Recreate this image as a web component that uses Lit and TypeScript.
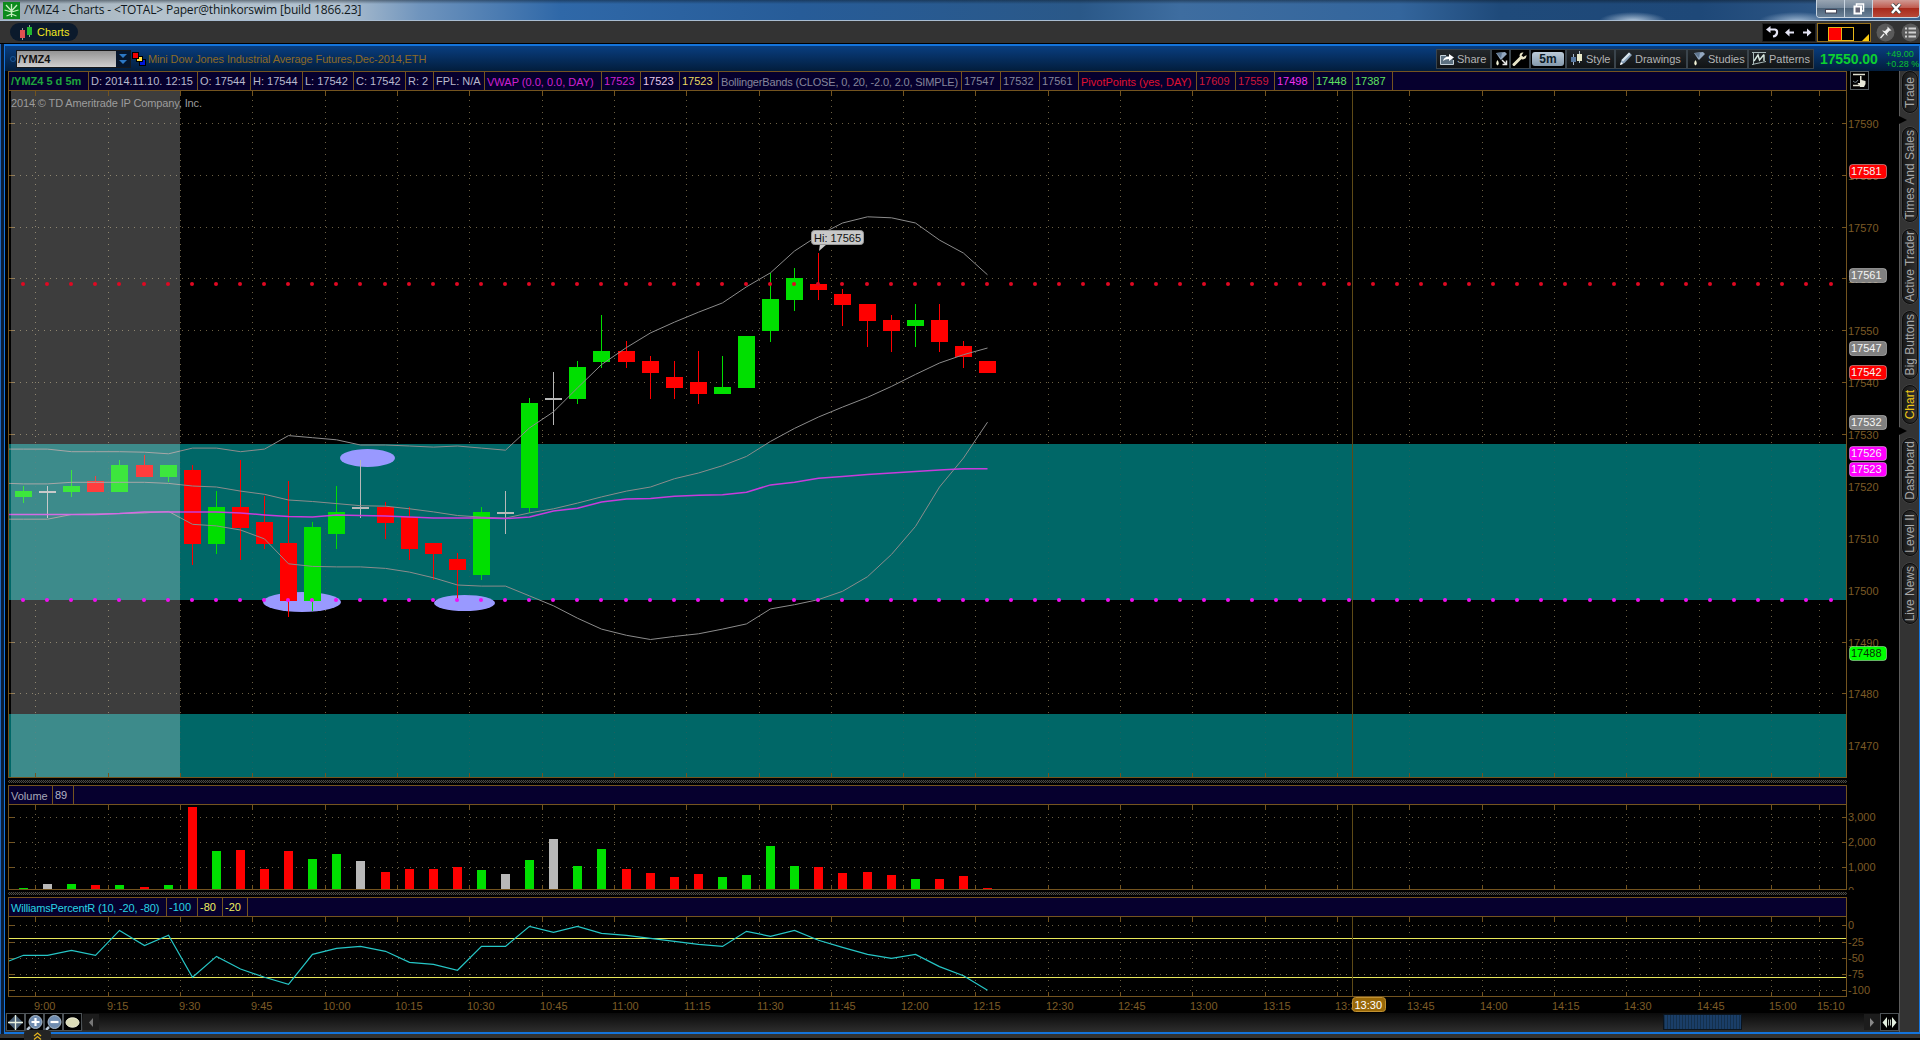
import { LitElement, html, svg, css } from 'lit';
import { customElement } from 'lit/decorators.js';
import { classMap } from 'lit/directives/class-map.js';
import { styleMap } from 'lit/directives/style-map.js';

// open, close, high, low (offset from 17500), volume, %R
type Bar = [number, number, number, number, number, number];

const BARS: Bar[] = [
  [18, 19, 20, 17, 134, -46.2],
  [19, 19, 20, 14, 296, -46.2],
  [19, 20, 23, 18, 296, -38.5],
  [21, 19, 22, 19, 255, -46.2],
  [19, 24, 25, 19, 255, -7.8],
  [24, 22, 26, 22, 174, -31.3],
  [22, 24, 24, 21, 255, -15.4],
  [23, 9, 24, 5, 3413, -80],
  [9, 16, 19, 7, 1632, -47.8],
  [16, 12, 25, 6, 1672, -67.2],
  [13, 9, 18, 8, 903, -80],
  [9, -2, 21, -5, 1632, -90.8],
  [-2, 12, 13, -4, 1308, -44.7],
  [11, 15, 20, 8, 1510, -35.4],
  [16, 16, 25, 14, 1227, -32.4],
  [16, 13, 17, 10, 781, -40],
  [14, 8, 16, 6, 903, -57],
  [9, 7, 9, 2, 903, -60],
  [6, 4, 7, -2, 984, -69.3],
  [3, 15, 16, 2, 862, -32.4],
  [15, 15, 19, 11, 700, -32.4],
  [16, 36, 37, 15, 1267, -1.6],
  [37, 37, 42, 32, 2117, -10.8],
  [37, 43, 44, 36, 1024, -1.6],
  [44, 46, 53, 43, 1713, -12.4],
  [46, 44, 48, 43, 903, -15.4],
  [44, 42, 45, 37, 741, -20],
  [41, 39, 44, 37, 579, -24.7],
  [40, 38, 46, 36, 700, -29.3],
  [38, 39, 45, 38, 579, -32.4],
  [39, 49, 49, 39, 660, -9.3],
  [50, 56, 61, 48, 1834, -17],
  [56, 60, 62, 54, 1024, -7.8],
  [59, 58, 65, 56, 984, -23],
  [57, 55, 58, 51, 741, -33.9],
  [55, 52, 55, 47, 781, -44.7],
  [52, 50, 53, 46, 660, -50.8],
  [51, 52, 55, 47, 498, -44.7],
  [52, 48, 55, 46, 498, -63.6],
  [47, 45, 48, 43, 619, -77.5],
  [44, 42, 44, 42, 134, -100],
];

// The first value of every study line sits on the left edge of the pane.
const UPPER = [
  27.1, 27.1, 27.1, 26.6, 26.6, 26.6, 26.5, 26.2, 27.3, 27.3, 26.6, 27.1, 29.7, 29.3, 28.9, 27.9, 27.9, 27.7, 27.5,
  27.7, 27.3, 26.9, 31.2, 34.3, 38.9, 43.4, 46.7, 49.5, 51.6, 53.5, 55.3, 58.4, 61.1, 65.3, 68.3, 70.7, 71.9, 71.7,
  70.7, 67.4, 64.9, 60.7,
];
const MIDDLE = [
  20.5, 20.4, 20.4, 20.7, 20.7, 20.7, 20.7, 20.5, 20, 19.8, 19, 18.4, 17.3, 17, 16.6, 16.2, 16.1, 15.6, 15, 14.3, 14,
  13.8, 14.8, 15.6, 16.7, 17.9, 19, 19.8, 21.4, 22.5, 23.9, 25.7, 28.6, 31.1, 33.3, 35.2, 37.1, 39.2, 41.5, 43.7,
  45.3, 46.6,
];
const LOWER = [
  13.6, 13.6, 13.6, 14.5, 14.6, 14.7, 14.8, 15.1, 12.6, 12.3, 11.5, 9.8, 5, 4.5, 4.4, 4.4, 4.1, 3.4, 2.3, 0.9, 0.7,
  0.7, -1.2, -3.1, -5.5, -7.6, -8.8, -9.6, -9, -8.5, -7.6, -6.6, -3.7, -2.9, -1.9, -0.3, 2.5, 6.8, 12.2, 19.8, 25.4,
  32.3,
];
const VWAP = [
  14.5, 14.5, 14.5, 14.5, 14.5, 14.7, 15, 15, 15, 15, 14.8, 14.4, 14.1, 14, 14.4, 14.3, 14.2, 14, 13.8, 13.8, 13.8,
  13.7, 14, 15.2, 15.7, 16.9, 17.5, 17.6, 18, 18.2, 18.3, 18.8, 20.2, 20.7, 21.5, 21.8, 22.2, 22.5, 22.8, 23.1, 23.3,
  23.3,
];

const TIMES = [
  '9:00', '9:15', '9:30', '9:45', '10:00', '10:15', '10:30', '10:45', '11:00', '11:15', '11:30', '11:45', '12:00',
  '12:15', '12:30', '12:45', '13:00', '13:15', '13:30', '13:45', '14:00', '14:15', '14:30', '14:45', '15:00',
];

const LEFT = 8;
const RIGHT = 1846;
const CROSS_X = 1352;

const barX = (i: number) => Math.round(23 + i * 24.1);
const priceY = (p: number) => 589.7 - p * 5.187;
const volumeY = (v: number) => 891.3 - (v / 1000) * 24.7;
const percentY = (r: number) => 925.3 - r * 0.65;

const GRID_X = [...TIMES.map((_, i) => Math.round(35.2 + i * 72.33)), 1819];
const LABELS = [...TIMES, '15:10'];

const colorOf = ([open, close]: Bar) => (close > open ? '#00df00' : close < open ? '#ff0000' : '#b8b8b8');

const points = (values: number[], y: (v: number) => number) =>
  values.map((v, i) => `${i === 0 ? LEFT + 1 : barX(i - 1) + 0.5},${y(v).toFixed(1)}`).join(' ');

const TAGS = [
  { text: '17581', y: 171, fill: '#ff0000' },
  { text: '17561', y: 275, fill: '#808080' },
  { text: '17547', y: 348, fill: '#808080' },
  { text: '17542', y: 372, fill: '#ff0000' },
  { text: '17532', y: 422, fill: '#808080' },
  { text: '17526', y: 453, fill: '#ff00ff' },
  { text: '17523', y: 469, fill: '#ff00ff' },
  { text: '17488', y: 653, fill: '#00ff00' },
];

// text, colour, cell width, extra class
type Cell = [string, string, number, string?];

const PRICE_CELLS: Cell[] = [
  ['/YMZ4 5 d 5m', '#1fa53c', 80, 'bold'],
  ['D: 2014.11.10. 12:15', '#b9b9cc', 109],
  ['O: 17544', '#b9b9cc', 53],
  ['H: 17544', '#b9b9cc', 52],
  ['L: 17542', '#b9b9cc', 51],
  ['C: 17542', '#b9b9cc', 52],
  ['R: 2', '#b9b9cc', 28],
  ['FPL: N/A', '#b9b9cc', 51],
  ['VWAP (0.0, 0.0, DAY)', '#d020d0', 117, 'low'],
  ['17523', '#d020d0', 39],
  ['17523', '#e8c8e8', 39],
  ['17523', '#e8d860', 39],
  ['BollingerBands (CLOSE, 0, 20, -2.0, 2.0, SIMPLE)', '#85859a', 243, 'tight'],
  ['17547', '#85859a', 39],
  ['17532', '#85859a', 39],
  ['17561', '#85859a', 39],
  ['PivotPoints (yes, DAY)', '#e01030', 118, 'low'],
  ['17609', '#d01838', 39],
  ['17559', '#d01838', 39],
  ['17498', '#f030f0', 39],
  ['17448', '#60e060', 39],
  ['17387', '#60e060', 40],
];
const VOLUME_CELLS: Cell[] = [
  ['Volume', '#a8a8b8', 44, 'low'],
  ['89', '#b4b4c4', 21],
];
const PERCENT_CELLS: Cell[] = [
  ['WilliamsPercentR (10, -20, -80)', '#28d4e4', 158, 'tight'],
  ['-100', '#28d4e4', 31],
  ['-80', '#f0f060', 25],
  ['-20', '#f0f060', 25],
];

const TABS = [
  { text: 'Trade', height: 42, gap: 0 },
  { text: 'Times And Sales', height: 95, gap: 14 },
  { text: 'Active Trader', height: 75, gap: 7 },
  { text: 'Big Buttons', height: 68, gap: 7 },
  { text: 'Chart', height: 39, gap: 6, active: true },
  { text: 'Dashboard', height: 65, gap: 14 },
  { text: 'Level II', height: 46, gap: 7 },
  { text: 'Live News', height: 61, gap: 7 },
];

const icon = (w: number, h: number, body: unknown) =>
  html`<svg class="icon" width=${w} height=${h} viewBox="0 0 ${w} ${h}">${body}</svg>`;

const funnel = svg`<path d="M3 2 L12 1 L14 3 L8 9 L7 8 Z" fill="#93a8c0"/><path d="M3 2 L9 1.5 L8 7 Z" fill="#5f7690"/>
  <path d="M4.5 9 Q7 13 4.5 14.5 Q2 13 4.5 9" fill="#f4f4d8"/>`;

const ICONS = {
  leaf: icon(17, 17, svg`<rect width="17" height="17" fill="#0c8a1c"/>
    <path d="M8.5 15 V2 M8.5 9 L3 3 M8.5 9 L14 3 M8.5 10 L1.5 8 M8.5 10 L15.5 8 M8.5 12 L3.5 14 M8.5 12 L13.5 14" stroke="#c8f0c0" stroke-width="1.3" fill="none"/>`),
  candles: icon(15, 15, svg`<path d="M3.5 3 V15 M10.5 0 V12" stroke="#999"/><rect x="1" y="5" width="5" height="8" fill="#e05050"/>
    <rect x="8" y="2" width="5" height="8" fill="#20b830"/>`),
  link: icon(14, 14, svg`<rect x="7.5" y="7.5" width="6" height="6" fill="#0018d8" stroke="#000"/>
    <rect x="4.5" y="4.5" width="6" height="5" fill="#ffe040" stroke="#000"/><rect x=".5" y=".5" width="6" height="6" fill="#f00000" stroke="#000"/>`),
  share: icon(15, 14, svg`<path d="M6 3.5 H.5 V12.5 H13.5 V8" fill="#5c7080" stroke="#c4d0d8"/>
    <path d="M3 9 Q4 4.500 9 4.500 V2 L14 5.500 L9 9 V7 Q5 7 3 9" fill="#fff"/>`),
  funnelMove: icon(16, 16, svg`${funnel}<path d="M9 9 L13 13 M13.500 9.500 V13.500 H9.500" stroke="#e8e8e8" stroke-width="1.5" fill="none"/>`),
  funnel: icon(15, 16, funnel),
  wrench: icon(16, 16, svg`<path d="M2 13.500 L8.500 7" stroke="#e8e4c8" stroke-width="3" stroke-linecap="round"/>
    <path d="M14.500 4 L11.500 6 L9.500 4.500 L11.500 1.500 Q8 1 7.500 4.500 Q8 8.500 11 8.500 Q14.500 8 14.500 4" fill="#e8e4c8"/>`),
  style: icon(14, 15, svg`<path d="M3.500 3 V14 M9.500 0 V12" stroke="#a8b8c8"/><rect x="1" y="6" width="5" height="5" fill="#5878a0"/>
    <rect x="7" y="3" width="5" height="7" fill="#e8e8c8"/>`),
  pencil: icon(14, 15, svg`<path d="M1 14 L2.500 9 L10 1.500 L13 4 L5.500 12 Z" fill="#88a0b8"/><path d="M2.500 9 L10 1.500 L11.500 3 L4 10.500 Z" fill="#d8e4ec"/>
    <path d="M1 14 L2 11 L4 13 Z" fill="#fff"/>`),
  patterns: icon(15, 15, svg`<path d="M0 1.500 H14 M1.500 1 V13.500 M0 13.500 L14 10.500" stroke="#a8b8b8"/><path d="M2 10 L6 4 L7.500 9 L12 3.500 M12 3.500 V10" stroke="#d8e8e0" stroke-width="1.400" fill="none"/>`),
  undo: icon(50, 17, svg`<path d="M5 5.500 H10 Q12.500 6 12 9 Q11.500 12 8 12.500" stroke="#e4e4f4" stroke-width="2.200" fill="none"/><path d="M1 5.500 L5.500 2 V9 Z" fill="#e4e4f4"/>
    <path d="M23 8.500 H29 M38 8.500 H43" stroke="#e4e4f4" stroke-width="2"/><path d="M20 8.500 L24.500 4.500 V12.500 Z M46.500 8.500 L42 4.500 V12.500 Z" fill="#e4e4f4"/>`),
  pin: icon(19, 19, svg`<circle cx="9.500" cy="9.500" r="9" fill="#5a5a5a"/><path d="M4.500 15 L8 11" stroke="#eee" stroke-width="1.300"/>
    <path d="M6 7.500 L9 8 L11.500 5.500 L11.500 3.500 L15.500 7.500 L13.500 7.700 L11 10.500 L11.500 13 Z" fill="#f0f0f0"/>`),
  list: icon(19, 19, svg`<circle cx="9.500" cy="9.500" r="9" fill="#5a5a5a"/><path d="M4 5.500 H6 M7.500 5.500 H15 M4 9.500 H6 M7.500 9.500 H15 M4 13.500 H6 M7.500 13.500 H15" stroke="#d0d0d0" stroke-width="2"/>`),
  hand: icon(19, 19, svg`<rect x=".5" y=".5" width="18" height="18" fill="#000" stroke="#555d60"/><path d="M3 3.500 H15 M3 14.500 H9" stroke="#e0e0d0" stroke-width="1.500"/>
    <path d="M3 10 Q6 13 8 9" stroke="#788890" fill="none"/><path d="M10 5 H11.500 V9 L15.500 10 V13 L14 16 H10 L7.500 12 L10 12 Z" fill="#e8e8d8"/>`),
  cross: icon(17, 17, svg`<path d="M8.500 1 L16 8.500 L8.500 16 L1 8.500 Z" fill="#4a6076"/><path d="M8.500 1 V16 M1 8.500 H16" stroke="#e8f0e0" stroke-width="1.300"/>`),
  zoomIn: icon(17, 17, svg`<path d="M1 16 L4 13" stroke="#b8c8d8" stroke-width="2.500"/><circle cx="9.500" cy="8" r="6.500" fill="#6f8cb0" stroke="#a8b8c8"/><path d="M9.500 4 V12 M5.500 8 H13.500" stroke="#fff" stroke-width="2.200"/>`),
  zoomOut: icon(17, 17, svg`<path d="M1 16 L4 13" stroke="#b8c8d8" stroke-width="2.500"/><circle cx="9.500" cy="8" r="6.500" fill="#6f8cb0" stroke="#a8b8c8"/><path d="M5.500 8 H13.500" stroke="#fff" stroke-width="2.200"/>`),
  oval: icon(17, 17, svg`<ellipse cx="8.500" cy="8.500" rx="6.500" ry="4.700" fill="#dcdcb8" stroke="#f0f0d8"/>`),
  split: icon(17, 17, svg`<path d="M1.500 8.500 L6 3 V14 Z M15.500 8.500 L11 3 V14 Z" fill="#e4f0e0"/><path d="M7.500 5.500 V11.500 M9.500 5.500 V11.500" stroke="#b8c4b8"/>`),
};

@customElement('app-root')
export class AppRoot extends LitElement {
  static styles = css`
    :host {
      display: flex;
      flex-direction: column;
      width: 1920px;
      height: 1040px;
      overflow: hidden;
      background: #000;
      font: 11px/14px 'Liberation Sans', Arial, sans-serif;
      color: #b8b8b8;
      white-space: nowrap;
    }
    * {
      box-sizing: border-box;
    }
    svg {
      display: block;
      flex: none;
    }
    .titlebar {
      display: flex;
      align-items: center;
      height: 21px;
      padding-left: 3px;
      gap: 4px;
      border-bottom: 1px solid #a9bdd2;
      color: #101820;
      font: 12px/16px 'Open Sans', sans-serif;
      background:
        linear-gradient(rgba(10, 20, 30, 0.45), transparent 4px),
        radial-gradient(34px 9px at 1633px 21px, #b4c8dc, transparent),
        radial-gradient(38px 9px at 1797px 21px, #9db6d0, transparent),
        linear-gradient(90deg, #9aa8b4 0, #b4c2cc 150px, #afc0cf 340px, #6f94bd 420px, #2f68a8 560px, #275c98 800px,
          #2a5888 1080px, #3e6da0 1180px, #33659c 1400px, #1f4a7a 1500px, #1e4878 1700px, #3a6290 1920px);
    }
    .title {
      letter-spacing: -0.14px;
    }
    .window-buttons {
      display: flex;
      align-self: flex-start;
      width: 104px;
      height: 18px;
      margin-left: auto;
      border: 1px solid #c8d4e0;
      border-top: 0;
      border-radius: 0 0 4px 4px;
      overflow: hidden;
    }
    .window-button {
      display: flex;
      justify-content: center;
      align-items: center;
      width: 28px;
      border-right: 1px solid #c8d4e0;
      background: linear-gradient(#99a5b2, #76889b 45%, #4d6379 50%, #6c8298);
    }
    .window-close {
      flex: 1;
      border: 0;
      background: linear-gradient(#d09a94, #c05c50 45%, #a82a1c 50%, #b84838);
    }
    .strip {
      display: flex;
      align-items: center;
      height: 22px;
      padding: 0 0 0 10px;
      background: #333;
    }
    .charts-tab {
      display: flex;
      align-items: center;
      gap: 3px;
      width: 68px;
      height: 18px;
      padding-left: 9px;
      border-radius: 9px;
      background: #0b1a2c;
      color: #f0e820;
    }
    .strip-tools {
      display: flex;
      align-items: center;
      margin-left: auto;
      gap: 1px;
    }
    .history {
      width: 54px;
      height: 19px;
      padding-left: 2px;
      border: 1px solid #222;
      background: #000;
    }
    .color-link {
      display: flex;
      width: 54px;
      height: 19px;
      border: 1px solid #96701c;
      background: #000;
      margin-right: 4px;
    }
    .strip-tools .round {
      margin-right: 5px;
    }
    .workspace {
      display: flex;
      height: 990px;
      background: #0b1d36;
      border-left: 1px solid #1d66c0;
      padding-left: 3px;
      margin-top: 1px;
    }
    .frame {
      flex: 1;
      display: flex;
      flex-direction: column;
      border: solid #1474dc;
      border-width: 2px 1px 2px 1px;
      background: #000;
    }
    .toolbar {
      display: flex;
      align-items: center;
      height: 25px;
      padding-left: 5px;
      background: linear-gradient(#093e80, #021d3c);
    }
    .ring {
      width: 6px;
      height: 6px;
      border: 1px solid #1c5896;
      border-radius: 50%;
    }
    .symbol {
      display: flex;
      align-items: center;
      width: 115px;
      height: 18px;
      margin: 0 1px 0 0;
      padding-left: 1px;
      border: 1px solid #16181a;
      background: linear-gradient(#949494, #cfcfcf);
      color: #111;
      font-weight: bold;
    }
    .drop {
      margin-left: auto;
      width: 14px;
      height: 16px;
      background: #06162c;
    }
    .description {
      margin-left: 2px;
      color: #8d6a26;
      letter-spacing: -0.12px;
    }
    .buttons {
      display: flex;
      margin-left: auto;
    }
    .button {
      display: flex;
      align-items: center;
      gap: 2px;
      height: 20px;
      padding-left: 3px;
      border: 1px solid #3a444c;
      background: linear-gradient(#23282c, #111416);
      color: #b4b4b4;
    }
    .button.dark {
      padding-left: 1px;
      background: #000;
    }
    .interval {
      width: 32px;
      height: 14px;
      border-radius: 3px;
      background: linear-gradient(#bccbd8, #8499ac);
      color: #0c1c28;
      text-align: center;
      font-size: 12px;
      font-weight: bold;
    }
    .last {
      width: 60px;
      margin: 0 0 0 6px;
      color: #0cd030;
      font: bold 14px/14px 'Liberation Sans', sans-serif;
      letter-spacing: -0.1px;
    }
    .change {
      width: 32px;
      margin: 0 1px 0 6px;
      color: #0cc030;
      font-size: 9px;
      line-height: 10px;
    }
    .main {
      display: flex;
      height: 961px;
    }
    .panes {
      display: flex;
      flex-direction: column;
      width: 1894px;
      padding-left: 3px;
    }
    .study-row {
      display: flex;
      height: 19px;
    }
    .study {
      display: flex;
      width: 1839px;
      height: 19px;
      border: 1px solid #74541f;
      border-bottom: 0;
      background: #06002e;
    }
    .cell {
      height: 18px;
      padding-left: 2px;
      border-right: 1px solid #74541f;
      line-height: 18px;
      overflow: hidden;
    }
    .cell.bold {
      font-weight: bold;
    }
    .cell.low {
      line-height: 20px;
    }
    .cell.tight {
      line-height: 20px;
      letter-spacing: -0.17px;
    }
    .hand {
      margin-left: 3px;
    }
    .splitter {
      width: 1839px;
      height: 7px;
      padding: 2px 0;
    }
    .splitter-grip {
      height: 3px;
      background: repeating-conic-gradient(#4a4a44 0 25%, #0c0c0c 0 50%) 0 0 / 2px 2px;
    }
    .scroll {
      display: flex;
      height: 19px;
      margin-left: -3px;
      padding-left: 1px;
      background: linear-gradient(#0a0a0a, #2e2e2e);
    }
    .scroll-tool {
      display: flex;
      justify-content: center;
      width: 19px;
      height: 18px;
      border: 1px solid #4c5256;
      background: #000;
      overflow: hidden;
    }
    .arrow {
      display: flex;
      align-items: center;
      justify-content: center;
      width: 16px;
      height: 16px;
      margin: 1px 0 0 1px;
      background: #1c1c1c;
    }
    .thumb {
      width: 79px;
      height: 16px;
      margin: 1px 0 0 1564px;
      border: 1px solid #0a141e;
      background: repeating-linear-gradient(90deg, #14304c 0 1px, #1a3e68 1px 3px);
    }
    .scroll .to-right {
      margin-left: auto;
    }
    .sidebar {
      display: flex;
      flex-direction: column;
      flex: 1;
      padding-left: 2px;
      border-left: 1px solid #5c5c5c;
      background: #333;
    }
    .tab {
      position: relative;
      display: flex;
      align-items: center;
      justify-content: center;
      width: 16px;
      border: 1px solid #0c0c0c;
      border-radius: 8px;
      background: linear-gradient(90deg, #181818, #323232);
      box-shadow: 0 0 0 0.5px #505050;
      color: #a8a8a8;
      font-size: 12px;
    }
    .tab span {
      writing-mode: vertical-rl;
      transform: rotate(180deg);
    }
    .tab.active {
      color: #f0c818;
    }
    .tab.notched::before {
      content: '';
      position: absolute;
      left: -4px;
      top: -12px;
      border: solid transparent;
      border-width: 4px 0 4px 8px;
      border-left-color: #000;
    }
    .bottom {
      display: flex;
      height: 6px;
      border-bottom: 2px solid #000;
      background: #333;
    }
    .expander {
      position: relative;
      top: -4px;
      width: 27px;
      height: 10px;
      margin-left: 24px;
      padding-top: 2px;
      border-radius: 4px 4px 0 0;
      background: #242424;
    }
    .expander svg {
      margin: 0 auto;
    }
    .axis {
      fill: #7c5b26;
    }
    .chart text {
      font: 11px 'Liberation Sans', Arial, sans-serif;
    }
  `;

  frameLines(top: number, bottom: number) {
    return svg`
      <path d="M${LEFT + 0.5} ${top} V${bottom + 1} M${RIGHT + 0.5} ${top} V${bottom + 1} M${LEFT} ${top + 0.5} H${RIGHT + 1} M${LEFT} ${bottom + 0.5} H${RIGHT + 1}" stroke="#74541f" fill="none"/>
      ${GRID_X.map((x) => svg`<path d="M${x + 0.5} ${top} v6 M${x + 0.5} ${bottom} v-4" stroke="#74541f"/>`)}
    `;
  }

  gridLines(top: number, bottom: number, rows: number[]) {
    return svg`
      ${GRID_X.map((x) => svg`<path d="M${x + 0.5} ${top + 10} V${bottom - 4}" stroke="#6c6044" stroke-dasharray="1 5"/>`)}
      ${rows.map((y) => svg`
        <path d="M${LEFT + 6} ${Math.round(y) + 0.5} H${RIGHT - 8}" stroke="#6c6044" stroke-dasharray="1 5"/>
        <path d="M${LEFT} ${Math.round(y) + 0.5} h6 M${RIGHT} ${Math.round(y) + 0.5} h-4" stroke="#74541f"/>`)}
    `;
  }

  crosshair(top: number, bottom: number) {
    return svg`<path d="M${CROSS_X + 0.5} ${top} V${bottom}" stroke="#5e4a16"/>`;
  }

  candle(bar: Bar, i: number) {
    const [open, close, high, low] = bar;
    const x = barX(i);
    const top = Math.round(priceY(Math.max(open, close)));
    const bottom = Math.round(priceY(Math.min(open, close)));
    const color = colorOf(bar);
    return svg`
      <path d="M${x + 0.5} ${Math.round(priceY(high))} V${Math.round(priceY(low)) + 1}" stroke=${color}/>
      <rect x=${x - 8} y=${top} width="17" height=${Math.max(bottom - top + 1, 2)} fill=${color}/>
    `;
  }

  pivotDots(y: number, color: string) {
    return Array.from({ length: 76 }, (_, i) => svg`<circle cx=${barX(i)} cy=${y} r="2" fill=${color}/>`);
  }

  priceChart() {
    const rows = [90, 80, 70, 60, 50, 40, 30, 20, 10, 0, -10, -20, -30];
    return html`
      <svg class="chart" width="1891" height="688" viewBox="8 90 1891 688">
        ${this.gridLines(90, 777, rows.map(priceY))}
        <rect x="9" y="444" width="1837" height="156" fill="#006767" />
        <rect x="9" y="714" width="1837" height="63" fill="#006767" />
        ${GRID_X.map((x) => svg`<path d="M${x + 0.5} 444 V600 M${x + 0.5} 714 V777" stroke="#30605a" stroke-dasharray="1 5" opacity=".6"/>`)}
        <ellipse cx="367.500" cy="458" rx="27.500" ry="9" fill="#9999ff" />
        <ellipse cx="302" cy="602" rx="39" ry="10" fill="#9999ff" />
        <ellipse cx="464.500" cy="603" rx="30.500" ry="8" fill="#9999ff" />
        ${BARS.map((bar, i) => this.candle(bar, i))}
        ${[UPPER, MIDDLE, LOWER].map(
          (line) => svg`<polyline points=${points(line, priceY)} fill="none" stroke="#8c8c8c" stroke-width="1"/>`
        )}
        <polyline points=${points(VWAP, priceY)} fill="none" stroke="#c83cdc" stroke-width="1.5" />
        <rect x="11" y="91" width="169" height="686" fill="#fff" opacity=".24" />
        ${this.pivotDots(284, '#e00822')} ${this.pivotDots(600, '#f010f0')}
        ${this.crosshair(90, 777)} ${this.frameLines(90, 777)}
        <text x="11" y="107" fill="#9c9c9c" textLength="191">2014 © TD Ameritrade IP Company, Inc.</text>
        <path d="M819 251 L820 244 H827 Z" fill="#ccc" />
        <rect x="811.500" y="230.500" width="52" height="14" rx="3" fill="#c8c8c8" stroke="#999" />
        <text x="814" y="242" fill="#111">Hi: 17565</text>
        ${rows.map((p) => svg`<text class="axis" x="1848" y=${Math.round(priceY(p)) + 5}>${17500 + p}</text>`)}
        ${TAGS.map(
          (t) => svg`
            <rect x="1849.500" y=${t.y - 6.5} width="37" height="14" rx="3" fill=${t.fill} stroke="#fff" stroke-opacity=".4"/>
            <text x="1851" y=${t.y + 4} fill=${t.text === '17488' ? '#053005' : '#f4f4f4'}>${t.text}</text>`
        )}
      </svg>
    `;
  }

  volumeChart() {
    return html`
      <svg class="chart" width="1891" height="86" viewBox="8 804 1891 86">
        ${this.gridLines(804, 889, [1000, 2000, 3000].map(volumeY))}
        ${BARS.map((bar, i) => {
          const top = Math.round(volumeY(bar[4]));
          return svg`<rect x=${barX(i) - 4} y=${top} width="9" height=${889 - top} fill=${colorOf(bar)}/>`;
        })}
        ${this.crosshair(804, 889)} ${this.frameLines(804, 889)}
        ${[0, 1000, 2000, 3000].map(
          (v) => svg`<text class="axis" x="1848" y=${Math.round(volumeY(v)) + 4}>${v.toLocaleString('en-US')}</text>`
        )}
      </svg>
    `;
  }

  percentChart() {
    const rows = [0, -25, -50, -75, -100];
    return html`
      <svg class="chart" width="1891" height="97" viewBox="8 916 1891 97">
        ${this.gridLines(916, 996, rows.map(percentY))}
        <path d="M9 938.500 H1846 M9 977.500 H1846" stroke="#e8e85a" />
        <polyline points=${points([-54.9, ...BARS.map((b) => b[5])], percentY)} fill="none" stroke="#26c6c6" stroke-width="1.200" />
        ${this.crosshair(916, 996)} ${this.frameLines(916, 996)}
        ${rows.map((r) => svg`<text class="axis" x="1848" y=${Math.round(percentY(r)) + 4}>${r}</text>`)}
        ${LABELS.map(
          (label, i) => svg`<text class="axis" x=${GRID_X[i] - (label.length > 4 ? 2 : 1)} y="1010">${label}</text>`
        )}
        <rect x="1352.500" y="997.500" width="33" height="14" rx="3" fill="#986808" stroke="#c09030" />
        <text x="1354.500" y="1008.500" fill="#fff">13:30</text>
      </svg>
    `;
  }

  study(cells: Cell[], extra: unknown = '') {
    return html`
      <div class="study-row">
        <div class="study">
          ${cells.map(
            ([text, color, width, kind]) =>
              html`<div
                class=${classMap({ cell: true, bold: kind === 'bold', low: kind === 'low', tight: kind === 'tight' })}
                style=${styleMap({ color, width: `${width}px` })}
              >${text}</div>`
          )}
        </div>
        ${extra}
      </div>
    `;
  }

  button(width: number, content: unknown, dark = false) {
    return html`<div class=${classMap({ button: true, dark })} style=${styleMap({ width: `${width}px` })}>${content}</div>`;
  }

  render() {
    return html`
      <div class="titlebar">
        ${ICONS.leaf}
        <span class="title">/YMZ4 - Charts - &lt;TOTAL&gt; Paper@thinkorswim [build 1866.23]</span>
        <div class="window-buttons">
          <div class="window-button">${icon(12, 10, svg`<rect x=".5" y="5.500" width="11" height="3.500" fill="#fff" stroke="#445"/>`)}</div>
          <div class="window-button">
            ${icon(12, 12, svg`<rect x="3.500" y="1" width="7" height="7" fill="none" stroke="#fff" stroke-width="1.500"/><rect x="1.500" y="3.500" width="6.500" height="7" fill="#667" stroke="#fff" stroke-width="2"/>`)}
          </div>
          <div class="window-button window-close">
            ${icon(12, 11, svg`<path d="M2 1 L10 10 M10 1 L2 10" stroke="#444" stroke-width="4"/><path d="M2 1 L10 10 M10 1 L2 10" stroke="#fff" stroke-width="2.500"/>`)}
          </div>
        </div>
      </div>
      <div class="strip">
        <div class="charts-tab">${ICONS.candles}<span>Charts</span></div>
        <div class="strip-tools">
          <div class="history">${ICONS.undo}</div>
          <div class="color-link">
            ${icon(52, 17, svg`<rect x="10.500" y="3.500" width="13" height="13" fill="#f00" stroke="#e8b818"/><rect x="23.500" y="3.500" width="12" height="13" fill="#000" stroke="#e8b818"/><path d="M51 10 V17 H44 Z" fill="#f8c810"/>`)}
          </div>
          <div class="round">${ICONS.pin}</div>
          ${ICONS.list}
        </div>
      </div>
      <div class="workspace">
        <div class="frame">
          <div class="toolbar">
            <div class="ring"></div>
            <div class="symbol">
              /YMZ4
              <div class="drop">
                ${icon(14, 16, svg`<path d="M3 3 H11 L7 7 Z M3 9 H11 L7 13 Z" fill="#2c78c4"/>`)}
              </div>
            </div>
            ${ICONS.link}
            <div class="description">Mini Dow Jones Industrial Average Futures,Dec-2014,ETH</div>
            <div class="buttons">
              ${this.button(55, html`${ICONS.share}<span>Share</span>`)} ${this.button(19, ICONS.funnelMove, true)}
              ${this.button(20, ICONS.wrench, true)}
              ${this.button(36, html`<div class="interval">5m</div>`, true)}
              ${this.button(49, html`${ICONS.style}<span>Style</span>`)}
              ${this.button(72, html`${ICONS.pencil}<span>Drawings</span>`)}
              ${this.button(61, html`${ICONS.funnel}<span>Studies</span>`)}
              ${this.button(66, html`${ICONS.patterns}<span>Patterns</span>`)}
            </div>
            <div class="last">17550.00</div>
            <div class="change">+49.00<br />+0.28 %</div>
          </div>
          <div class="main">
            <div class="panes">
              ${this.study(PRICE_CELLS, html`<div class="hand">${ICONS.hand}</div>`)} ${this.priceChart()}
              <div class="splitter"><div class="splitter-grip"></div></div>
              ${this.study(VOLUME_CELLS)} ${this.volumeChart()}
              <div class="splitter"><div class="splitter-grip"></div></div>
              ${this.study(PERCENT_CELLS)} ${this.percentChart()}
              <div class="scroll">
                ${[ICONS.cross, ICONS.zoomIn, ICONS.zoomOut, ICONS.oval].map(
                  (tool) => html`<div class="scroll-tool">${tool}</div>`
                )}
                <div class="arrow">${icon(6, 9, svg`<path d="M5 0 V9 L1 4.500 Z" fill="#777"/>`)}</div>
                <div class="thumb"></div>
                <div class="arrow to-right">${icon(6, 9, svg`<path d="M1 0 V9 L5 4.500 Z" fill="#888"/>`)}</div>
                <div class="scroll-tool">${ICONS.split}</div>
              </div>
            </div>
            <div class="sidebar">
              ${TABS.map(
                (tab) => html`<div
                  class=${classMap({ tab: true, active: !!tab.active, notched: tab.gap > 10 })}
                  style=${styleMap({ height: `${tab.height}px`, marginTop: `${tab.gap}px` })}
                ><span>${tab.text}</span></div>`
              )}
            </div>
          </div>
        </div>
      </div>
      <div class="bottom">
        <div class="expander">
          ${icon(9, 8, svg`<path d="M1 4 L4.500 1 L8 4 M1 7.500 L4.500 4.500 L8 7.500" stroke="#e0b020" stroke-width="1.300" fill="none"/>`)}
        </div>
      </div>
    `;
  }
}
